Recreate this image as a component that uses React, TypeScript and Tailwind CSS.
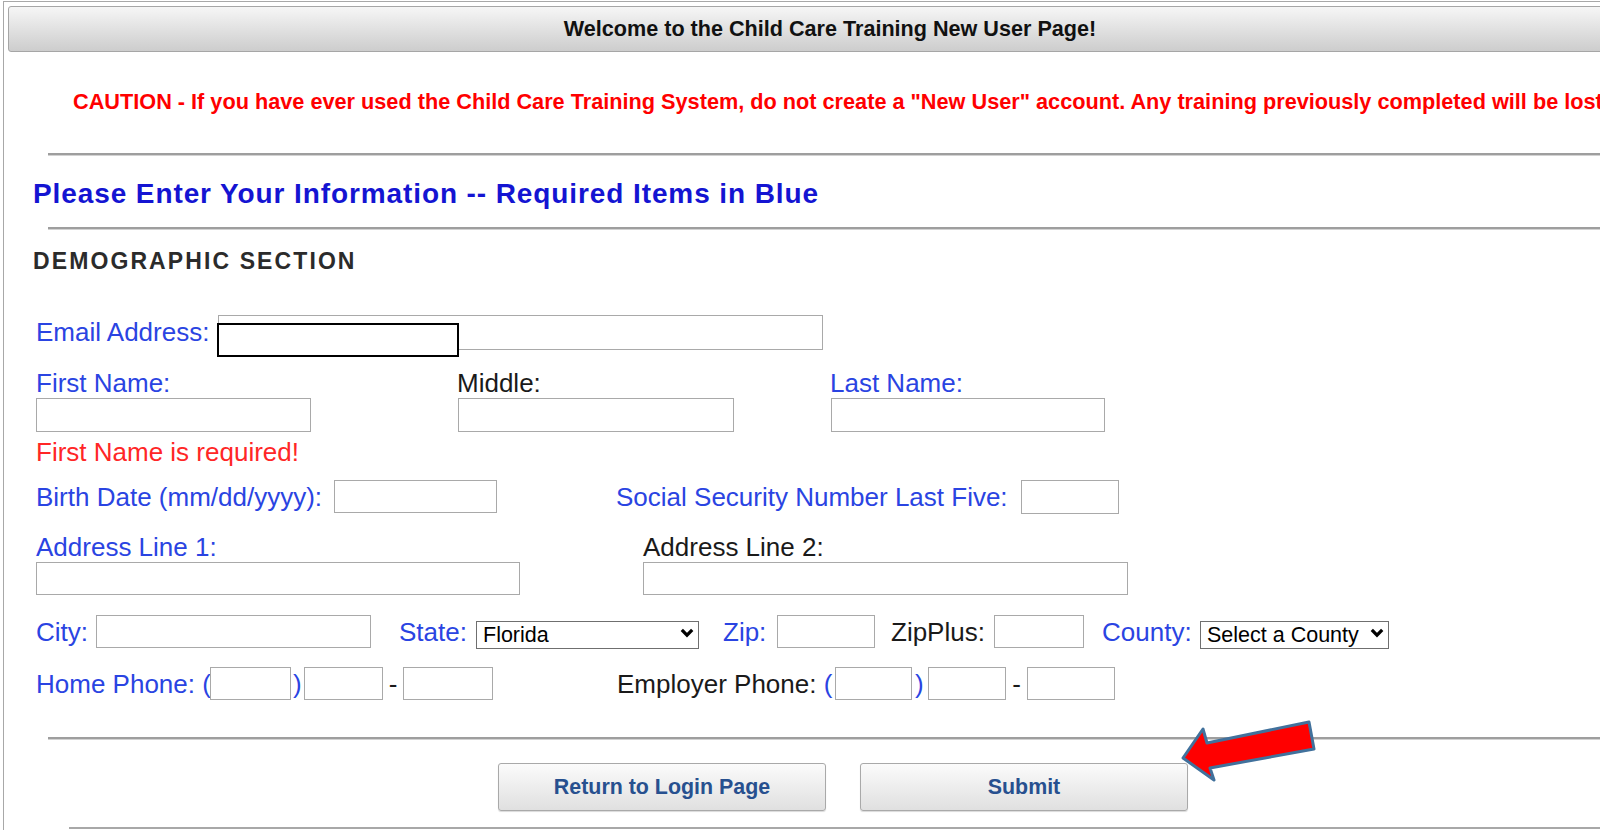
import React from "react"

const blue = "text-[#2a44e2]"

function TextBox({ className }: { className: string }) {
  return <input type="text" className={`border border-[#a9a9a9] bg-white outline-none ${className}`} />
}

function Rule({ className }: { className: string }) {
  return <div className={`h-[3px] w-[1700px] border-t-2 border-b border-t-[#9e9e9e] border-b-[#d2d2d2] ${className}`} />
}

function Select({ value, className }: { value: string; className: string }) {
  return (
    <div className={`relative h-[28px] ${className}`}>
      <select
        defaultValue={value}
        className="h-full w-full appearance-none border border-[#6f6f6f] bg-white pl-[6px] text-[21.5px] leading-[26px] text-black outline-none"
      >
        <option>{value}</option>
      </select>
      <svg className="pointer-events-none absolute right-[5px] top-[10px] h-[10px] w-[14px]" viewBox="0 0 14 10">
        <path d="M1.8 1.8 L7 7.2 L12.2 1.8" fill="none" stroke="#000" strokeWidth="3.2" />
      </svg>
    </div>
  )
}

function PageButton({ label }: { label: string }) {
  return (
    <button
      type="button"
      className="h-[48px] w-[328px] rounded-[3px] border border-[#a9a9a9] bg-linear-to-b from-[#fbfbfb] to-[#e0e0e0] text-[21.4px] font-bold text-[#27508f] shadow-[0_1px_1px_rgba(0,0,0,0.15)]"
    >
      {label}
    </button>
  )
}

export default function App() {
  return (
    <div className="relative h-[830px] w-[1600px] overflow-hidden bg-white font-['Liberation_Sans',Arial,sans-serif]">
      <div className="ml-[3px] mt-[1px] h-[829px] w-[1700px] border-l border-t border-[#a8a8a8]">
        <div className="ml-[4px] mt-[4px] flex h-[46px] w-[1644px] items-center justify-center rounded-[3px] border border-[#a6a6a6] bg-linear-to-b from-[#f6f6f6] to-[#cdcdcd] text-[21.6px] font-bold text-[#111]">
          Welcome to the Child Care Training New User Page!
        </div>

        <p className="mt-[38px] h-[24px] whitespace-nowrap pl-[69px] text-[21.7px] font-bold leading-[24px] text-[#ff0000]">
          CAUTION - If you have ever used the Child Care Training System, do not create a "New User" account. Any
          training previously completed will be lost!
        </p>

        <Rule className="ml-[44px] mt-[39px]" />

        <h1 className="ml-[29px] mt-[22px] h-[32px] whitespace-nowrap text-[28px] font-bold leading-[32px] tracking-[0.9px] text-[#1414d2]">
          Please Enter Your Information -- Required Items in Blue
        </h1>

        <Rule className="ml-[44px] mt-[17px]" />

        <h2 className="ml-[29px] mt-[17px] h-[28px] text-[23px] font-bold leading-[28px] tracking-[2.1px] text-[#2b2b2b]">
          DEMOGRAPHIC SECTION
        </h2>

        <div className="ml-[32px] whitespace-nowrap text-[26px] leading-[30px]">
          <div className="relative mt-[40px] flex h-[35px] items-center">
            <span className={`-mt-[2px] w-[182px] ${blue}`}>Email Address:</span>
            <TextBox className="h-[35px] w-[605px]" />
            <div className="absolute left-[181px] top-[8px] h-[34px] w-[242px] border-2 border-black bg-white" />
          </div>

          <div className="mt-[18px] flex">
            <div className="flex w-[421px] flex-col">
              <span className={`h-[30px] ${blue}`}>First Name:</span>
              <TextBox className="h-[34px] w-[275px]" />
            </div>
            <div className="flex w-[373px] flex-col">
              <span className="h-[30px] text-[#1a1a1a]">Middle:</span>
              <TextBox className="ml-[1px] h-[34px] w-[276px]" />
            </div>
            <div className="flex flex-col">
              <span className={`h-[30px] ${blue}`}>Last Name:</span>
              <TextBox className="ml-[1px] h-[34px] w-[274px]" />
            </div>
          </div>

          <p className="mt-[5px] h-[30px] text-[#ff2626]">First Name is required!</p>

          <div className="mt-[13px] flex h-[33px] items-center">
            <span className={`w-[298px] ${blue}`}>Birth Date (mm/dd/yyyy):</span>
            <TextBox className="h-[33px] w-[163px]" />
            <span className={`ml-[119px] w-[405px] ${blue}`}>Social Security Number Last Five:</span>
            <TextBox className="h-[34px] w-[98px]" />
          </div>

          <div className="mt-[19px] flex">
            <div className="flex w-[607px] flex-col">
              <span className={`h-[30px] ${blue}`}>Address Line 1:</span>
              <TextBox className="h-[33px] w-[484px]" />
            </div>
            <div className="flex flex-col">
              <span className="h-[30px] text-[#1a1a1a]">Address Line 2:</span>
              <TextBox className="h-[33px] w-[485px]" />
            </div>
          </div>

          <div className="mt-[20px] flex h-[33px] items-center">
            <span className={`w-[60px] ${blue}`}>City:</span>
            <TextBox className="h-[33px] w-[275px]" />
            <span className={`ml-[28px] w-[77px] ${blue}`}>State:</span>
            <Select value="Florida" className="w-[223px]" />
            <span className={`ml-[24px] w-[54px] ${blue}`}>Zip:</span>
            <TextBox className="h-[33px] w-[98px]" />
            <span className="ml-[16px] w-[103px] text-[#1a1a1a]">ZipPlus:</span>
            <TextBox className="h-[33px] w-[90px]" />
            <span className={`ml-[18px] w-[98px] ${blue}`}>County:</span>
            <Select value="Select a County" className="w-[189px]" />
          </div>

          <div className="mt-[19px] flex h-[33px] items-center">
            <span className={`w-[174px] ${blue}`}>Home Phone: (</span>
            <TextBox className="h-[33px] w-[81px]" />
            <span className={`w-[13px] pl-[2px] ${blue}`}>)</span>
            <TextBox className="h-[33px] w-[79px]" />
            <span className="w-[20px] text-center text-[#1a1a1a]">-</span>
            <TextBox className="h-[33px] w-[90px]" />
            <span className="ml-[124px] w-[218px] text-[#1a1a1a]">
              Employer Phone: <span className={blue}>(</span>
            </span>
            <TextBox className="h-[33px] w-[77px]" />
            <span className={`w-[16px] pl-[3px] ${blue}`}>)</span>
            <TextBox className="h-[33px] w-[78px]" />
            <span className="w-[21px] text-center text-[#1a1a1a]">-</span>
            <TextBox className="h-[33px] w-[88px]" />
          </div>
        </div>

        <Rule className="ml-[44px] mt-[37px]" />

        <div className="ml-[494px] mt-[23px] flex gap-[34px]">
          <PageButton label="Return to Login Page" />
          <PageButton label="Submit" />
        </div>

        <div className="ml-[65px] mt-[16px] h-[2px] w-[1700px] bg-[#a8a8a8]" />
      </div>

      <svg className="absolute left-[1170px] top-[715px] h-[80px] w-[160px]" viewBox="0 0 160 80">
        <polygon
          points="13,43 33,14 37,28 139,7 144,34 40,53 44,65"
          fill="#ff0000"
          stroke="#41719c"
          strokeWidth="3"
          strokeLinejoin="round"
        />
      </svg>
    </div>
  )
}
